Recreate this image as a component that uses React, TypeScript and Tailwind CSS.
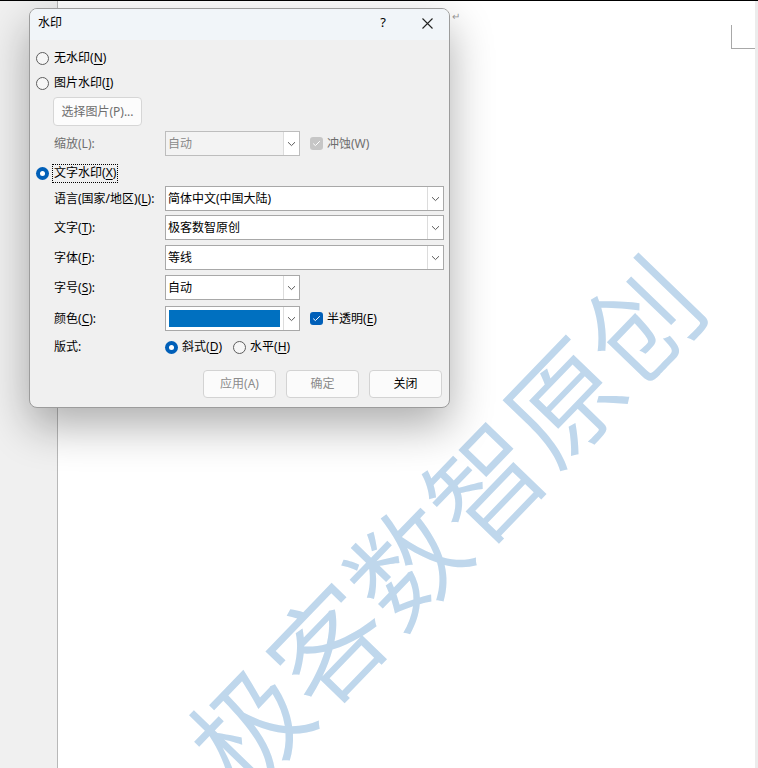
import React from "react";

const UI = "font-['Noto_Sans','Noto_Sans_CJK_SC',sans-serif]";

function Chevron() {
  return (
    <svg width="9" height="6" viewBox="0 0 9 6" fill="none">
      <path d="M1 1.2 L4.5 4.6 L8 1.2" stroke="#5a5a5a" strokeWidth="1" />
    </svg>
  );
}

function Radio({ checked }: { checked?: boolean }) {
  if (checked) {
    return (
      <span className="flex h-[13px] w-[13px] shrink-0 items-center justify-center rounded-full bg-[#005fb8]">
        <span className="h-[5px] w-[5px] rounded-full bg-white" />
      </span>
    );
  }
  return <span className="h-[13px] w-[13px] shrink-0 rounded-full border border-[#5e5e5e] bg-[#f6f6f6]" />;
}

function Check({ disabled }: { disabled?: boolean }) {
  return (
    <span
      className={`flex h-[13px] w-[13px] shrink-0 items-center justify-center rounded-[3px] ${
        disabled ? "bg-[#c6c6c6]" : "bg-[#005fb8]"
      }`}
    >
      <svg width="9" height="7" viewBox="0 0 9 7" fill="none">
        <path d="M1.2 3.6 L3.4 5.6 L7.8 1.2" stroke="white" strokeWidth="1" />
      </svg>
    </span>
  );
}

function Select({
  value,
  wide,
  disabled,
  color,
}: {
  value?: string;
  wide?: boolean;
  disabled?: boolean;
  color?: boolean;
}) {
  return (
    <div
      className={`flex h-[25px] shrink-0 border ${wide ? "w-[279px]" : "w-[135px]"} ${
        disabled ? "border-[#bdbdbd] bg-[#f3f3f3]" : "border-[#a8a8a8] bg-white"
      }`}
    >
      <div className="flex flex-1 items-center overflow-hidden">
        {color ? (
          <div className="ml-[3px] h-[17px] w-[111px] bg-[#0070c0]" />
        ) : (
          <span className={`pl-[2px] text-[12px] ${disabled ? "text-[#8a8a8a]" : "text-black"}`}>{value}</span>
        )}
      </div>
      <div className="flex w-[16px] items-center justify-center border-l border-[#dcdcdc] bg-white">
        <Chevron />
      </div>
    </div>
  );
}

function Key({ k }: { k: string }) {
  return (
    <>
      (<u className="underline-offset-2">{k}</u>)
    </>
  );
}

function FieldRow({ label, k, children, mt }: { label: string; k?: string; children: React.ReactNode; mt: string }) {
  return (
    <div className={`flex h-[25px] items-center pl-[24px] ${mt}`}>
      <span className="w-[111px] shrink-0 text-[12px] text-black">
        {label}
        {k && <Key k={k} />}:
      </span>
      {children}
    </div>
  );
}

function Button({ label, muted }: { label: string; muted?: boolean }) {
  return (
    <div
      className={`flex h-[28px] w-[73px] items-center justify-center rounded-[4px] border border-[#d3d3d3] bg-[#fbfbfb] text-[12px] ${
        muted ? "text-[#8c8c8c]" : "text-black"
      }`}
    >
      {label}
    </div>
  );
}

function WatermarkDialog() {
  return (
    <div className="absolute left-[29px] top-[8px] flex h-[400px] w-[421px] flex-col overflow-hidden rounded-[8px] border border-[#9c9c9c] bg-[#f0f0f0] shadow-[0_18px_44px_rgba(0,0,0,0.32)]">
      {/* title bar */}
      <div className="flex h-[31px] shrink-0 items-center bg-[#f1f5f9] pb-[3px] pl-[8px]">
        <span className="text-[12px] text-black">水印</span>
        <span className="ml-auto mr-[36px] text-[13px] text-black">?</span>
        <svg className="mr-[16px]" width="11" height="11" viewBox="0 0 11 11">
          <path d="M0.5 0.5 L10.5 10.5 M10.5 0.5 L0.5 10.5" stroke="#222" strokeWidth="1.1" />
        </svg>
      </div>

      <div className="flex flex-1 flex-col">
        <div className="mt-[6px] flex h-[24px] items-center gap-[5px] pl-[6px] text-[12px] text-black">
          <Radio />
          <span>
            无水印<Key k="N" />
          </span>
        </div>
        <div className="mt-[1px] flex h-[24px] items-center gap-[5px] pl-[6px] text-[12px] text-black">
          <Radio />
          <span>
            图片水印<Key k="I" />
          </span>
        </div>
        <div className="mt-[2px] pl-[23px]">
          <div className="flex h-[29px] w-[89px] items-center justify-center rounded-[4px] border border-[#d6d6d6] bg-[#fcfcfc] text-[12px] text-[#6e6e6e]">
            选择图片(P)...
          </div>
        </div>
        <div className="mt-[5px] flex h-[25px] items-center pl-[24px]">
          <span className="w-[111px] shrink-0 text-[12px] text-[#6e6e6e]">缩放(L):</span>
          <Select value="自动" disabled />
          <div className="ml-[10px] flex items-center gap-[4px] text-[12px] text-[#6e6e6e]">
            <Check disabled />
            <span>冲蚀(W)</span>
          </div>
        </div>
        <div className="mt-[7px] flex h-[20px] items-center gap-[3px] pl-[6px] text-[12px] text-black">
          <Radio checked />
          <span className="flex h-[19px] items-center border border-dotted border-black px-[1px]">
            文字水印<Key k="X" />
          </span>
        </div>

        <FieldRow label="语言(国家/地区)" k="L" mt="mt-[3px]">
          <Select value="简体中文(中国大陆)" wide />
        </FieldRow>
        <FieldRow label="文字" k="T" mt="mt-[4px]">
          <Select value="极客数智原创" wide />
        </FieldRow>
        <FieldRow label="字体" k="F" mt="mt-[5px]">
          <Select value="等线" wide />
        </FieldRow>
        <FieldRow label="字号" k="S" mt="mt-[5px]">
          <Select value="自动" />
        </FieldRow>
        <FieldRow label="颜色" k="C" mt="mt-[6px]">
          <Select color />
          <div className="ml-[10px] flex items-center gap-[4px] text-[12px] text-black">
            <Check />
            <span>
              半透明<Key k="E" />
            </span>
          </div>
        </FieldRow>

        <div className="mt-[6px] flex h-[20px] items-center pl-[24px] text-[12px] text-black">
          <span className="w-[111px] shrink-0">版式:</span>
          <div className="flex items-center gap-[4px]">
            <Radio checked />
            <span>
              斜式<Key k="D" />
            </span>
          </div>
          <div className="ml-[11px] flex items-center gap-[4px]">
            <Radio />
            <span>
              水平<Key k="H" />
            </span>
          </div>
        </div>

        <div className="mt-[13px] flex justify-end gap-[10px] pr-[7px]">
          <Button label="应用(A)" muted />
          <Button label="确定" muted />
          <Button label="关闭" />
        </div>
      </div>
    </div>
  );
}

export default function App() {
  return (
    <div className={`relative h-[768px] w-[758px] overflow-hidden bg-white ${UI}`}>
      <div className="flex h-full border-t border-black">
        {/* left margin of the editor */}
        <div className="w-[58px] shrink-0 border-r border-[#b8b8b8] bg-[#f0f0f0]" />
        {/* page */}
        <div className="flex flex-1 flex-col bg-white">
          <div className="flex justify-end">
            <div className="mt-[24px] h-[24px] w-[24px] border-b border-l border-[#a8a8a8]" />
          </div>
        </div>
        <div className="w-[3px] shrink-0 bg-[#ececec]" />
      </div>

      {/* watermark */}
      <div className="pointer-events-none absolute left-[442px] top-[520px] -translate-x-1/2 -translate-y-1/2 -rotate-[46deg] whitespace-nowrap font-['Noto_Sans_CJK_SC',sans-serif] text-[113px] font-[350] leading-none text-[#bfd7ec]">
        极客数智原创
      </div>

      <span className="absolute left-[452px] top-[9px] text-[10px] text-[#9a9a9a]">↵</span>

      <WatermarkDialog />
    </div>
  );
}
